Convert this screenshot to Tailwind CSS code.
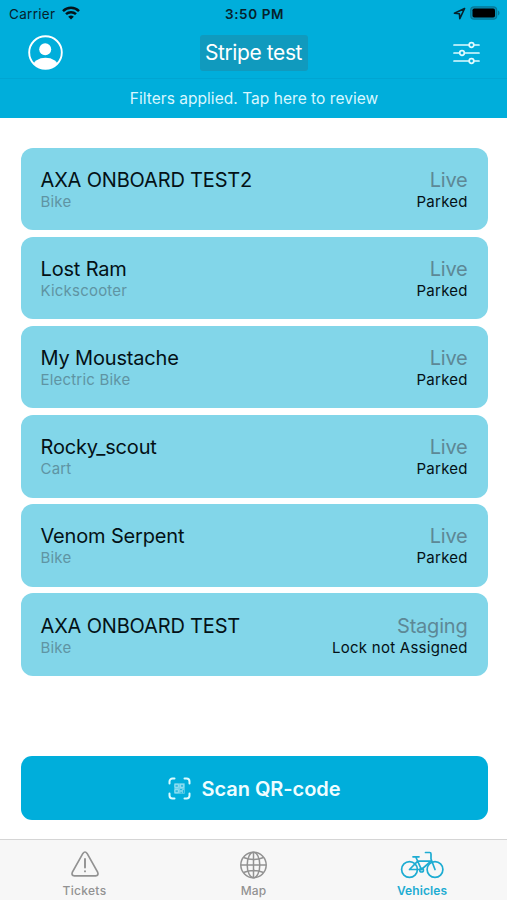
<!DOCTYPE html>
<html lang="en">
<head>
<meta charset="utf-8">
<title>Vehicles</title>
<script src="https://cdn.jsdelivr.net/npm/@tailwindcss/browser@4"></script>
</head>
<body class="bg-white">
<div class="w-[507px] h-[900px] flex flex-col overflow-hidden bg-white text-black font-['Inter','Liberation_Sans',sans-serif] whitespace-nowrap">
  <header class="h-[118px] shrink-0 bg-[#00aedb] flex flex-col">
    <div class="h-[27px] grid grid-cols-3 items-center pl-[9px] pr-[7px] text-[13.5px] leading-[28px]">
      <div class="flex items-center gap-[7px] text-[#06222c]">
        <span class="tracking-[0.3px]">Carrier</span>
        <svg class="-mt-[2px] w-[18px] h-[14px]" viewBox="0 0 18 14" fill="none" stroke="#04141a" stroke-width="2.5"><path d="M1 5.1a11.5 11.5 0 0 1 16 0M4 8.2a7.200 7.200 0 0 1 10 0"/><path d="M9 13.600 6.200 10.800a4 4 0 0 1 5.600 0Z" fill="#04141a" stroke="none"/></svg>
      </div>
      <div class="text-center font-semibold tracking-[0.6px] text-[#06222c]">3:50 PM</div>
      <div class="flex items-center justify-end gap-[4px] -mt-[2px]">
        <svg class="w-[13px] h-[13px]" viewBox="0 0 13 13" fill="none" stroke="#06222c" stroke-width="1.6" stroke-linejoin="round"><path d="M11.600 1.500 1.400 6.200l5 .5.4 5Z"/></svg>
        <svg class="w-[30px] h-[14px]" viewBox="0 0 30 14"><rect x=".7" y=".8" width="26" height="12.400" rx="3.500" fill="#078fb4" stroke="#067998" stroke-width="1.200"/><rect x="2.500" y="2.500" width="22.500" height="9" rx="1.800" fill="#000"/><path d="M28 4.500c2 .8 2 4.200 0 5Z" fill="#067998"/></svg>
      </div>
    </div>
    <div class="h-[52px] grid grid-cols-3 items-center pl-[27px] pr-[27px] border-b border-[#00a5d2]">
      <svg class="ml-px w-[35px] h-[35px]" viewBox="0 0 35 35"><defs><clipPath id="face"><circle cx="17.500" cy="17.500" r="16.500"/></clipPath></defs><circle cx="17.500" cy="17.500" r="16.300" fill="none" stroke="#fff" stroke-width="1.900"/><circle cx="17.200" cy="14.200" r="6" fill="#fff"/><ellipse cx="17.500" cy="31" rx="12.500" ry="8.300" fill="#fff" clip-path="url(#face)"/></svg>
      <div class="justify-self-center w-[108px] h-[36px] rounded-[3px] bg-[#109abe] text-white text-[21px] leading-[36px] text-center tracking-[-0.400px]">Stripe test</div>
      <svg class="justify-self-end w-[27px] h-[24px]" viewBox="0 0 27 24" stroke="#e0fbff" stroke-width="1.700" stroke-linecap="round" fill="#00aedb"><path d="M1 4h25M1 12h25M1 20h25"/><circle cx="18.500" cy="4" r="2.300"/><circle cx="9" cy="12" r="2.300"/><circle cx="18.500" cy="20" r="2.300"/></svg>
    </div>
    <div class="h-[39px] pl-px text-center text-[15.500px] leading-[40px] tracking-[0.040px] text-[#d8f7ff]">Filters applied. Tap here to review</div>
  </header>

  <main class="flex-1 pl-[20.500px] pr-[19.500px] pt-[29.500px] flex flex-col">
    <div class="flex flex-col gap-[6.600px]" id="list"></div>
    <button class="mt-[80.400px] h-[64px] rounded-[11px] bg-[#00aedb] flex items-center justify-center gap-[11px] text-[#effdff]">
      <svg class="w-[23px] h-[23px]" viewBox="0 0 23 23" fill="none" stroke="#dcfbff" stroke-width="2" stroke-linecap="round"><path d="M1.500 6.500v-2a3 3 0 0 1 3-3h2M16.500 1.500h2a3 3 0 0 1 3 3v2M21.500 16.500v2a3 3 0 0 1-3 3h-2M6.500 21.500h-2a3 3 0 0 1-3-3v-2"/><rect x="6.300" y="6.300" width="10.400" height="10.400" fill="#6fd3ec" stroke="none"/><path d="M7.300 7.300h3v3h-3ZM12.700 7.300h3v3h-3ZM7.300 12.700h3v3h-3Z" stroke-width=".8" stroke="#a5e6f5" fill="#35bde1"/><path d="M12.500 12.500h1M15.500 13.500v2M13 15.700h.5" stroke-width="1" stroke="#1bb4dd"/></svg>
      <span class="pt-px text-[20px] font-semibold tracking-[-0.050px]">Scan QR-code</span>
    </button>
  </main>

  <nav class="h-[61px] shrink-0 bg-[#f7f7f7] border-t border-[#d5d5d5] grid grid-cols-3 text-[12px] leading-[16px] font-medium text-[#929292]">
    <div class="flex flex-col items-center pt-[11px] gap-[3px]">
      <svg class="w-[30px] h-[29px]" viewBox="0 0 30 29" fill="none" stroke="#929292" stroke-width="1.700" stroke-linecap="round"><path d="M12.900 2.400Q15 -.4 17.100 2.400L27.600 21Q29 24.600 25.600 24.800H4.400Q1 24.600 2.400 21Z"/><path d="M15 8v8.500M15 20.200v.2" stroke-width="1.900"/></svg>
      <span class="tracking-[0.300px]">Tickets</span>
    </div>
    <div class="flex flex-col items-center pt-[11px] gap-[3px]">
      <svg class="w-[29px] h-[29px]" viewBox="0 0 29 29" fill="none" stroke="#929292" stroke-width="1.500"><circle cx="14.500" cy="14" r="12.700"/><ellipse cx="14.500" cy="14" rx="6.300" ry="12.700"/><path d="M14.500 1.300v25.400M1.800 14h25.400M4.500 6.500q10 4 20 0M4.500 21.500q10-4 20 0"/></svg>
      <span class="tracking-[0.100px]">Map</span>
    </div>
    <div class="flex flex-col items-center pt-[11px] gap-[3px] text-[#1dacd2]">
      <svg class="-ml-[2px] w-[44px] h-[29px]" viewBox="0 0 44 29" fill="none" stroke="#1dacd2" stroke-width="1.700" stroke-linecap="round" stroke-linejoin="round"><circle cx="9.500" cy="18.500" r="7.900"/><circle cx="35" cy="18.500" r="7.900"/><path d="M13 5.800h6M15.800 6l5.700 12.700M9.500 18.500l8.200-8.300H31M9.500 18.500h12l9.700-8.600M25.500 1.500h4.200q1.300 0 1.300 1.500v5L35 18.500"/><circle cx="21.600" cy="19.200" r="1.800"/></svg>
      <span class="-ml-px font-semibold tracking-[0.100px]">Vehicles</span>
    </div>
  </nav>
</div>
<script>
const vehicles = [
  ["AXA ONBOARD TEST2", "Bike", "Live", "Parked"],
  ["Lost Ram", "Kickscooter", "Live", "Parked"],
  ["My Moustache", "Electric Bike", "Live", "Parked"],
  ["Rocky_scout", "Cart", "Live", "Parked"],
  ["Venom Serpent", "Bike", "Live", "Parked"],
  ["AXA ONBOARD TEST", "Bike", "Staging", "Lock not Assigned"]
];
document.getElementById("list").innerHTML = vehicles.map(([name, type, mode, state]) => `
  <article class="h-[82.600px] rounded-[12px] bg-[#82d6e9] px-[20px] pt-[20.100px] flex justify-between">
    <div class="flex flex-col">
      <span class="text-[20px] leading-[25px] tracking-[-0.170px] text-[#041116]">${name}</span>
      <span class="text-[15px] leading-[18px] tracking-[0.200px] text-[#5f94a3]">${type}</span>
    </div>
    <div class="flex flex-col items-end">
      <span class="text-[20px] leading-[25px] tracking-[-0.200px] text-[#5d8896]">${mode}</span>
      <span class="-mr-[0.300px] text-[15px] leading-[18px] tracking-[0.270px] text-[#041116]">${state}</span>
    </div>
  </article>`).join("");
</script>
</body>
</html>
